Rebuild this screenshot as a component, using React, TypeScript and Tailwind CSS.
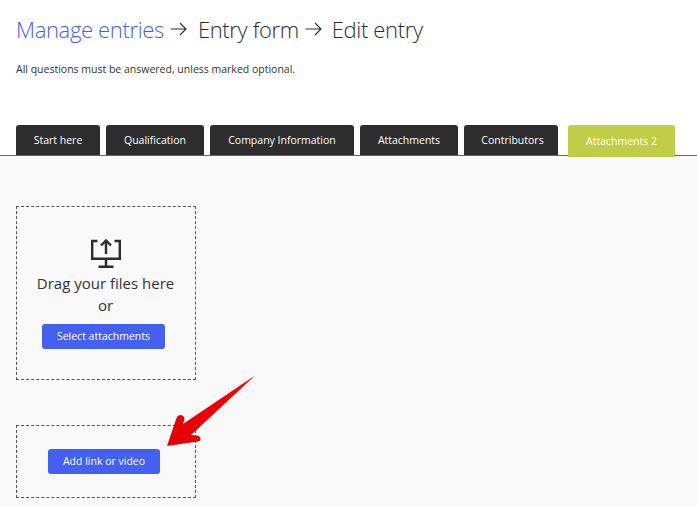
const tabs = [
  { label: "Start here", width: "w-[84px]", pad: "" },
  { label: "Qualification", width: "w-[98px]", pad: "" },
  { label: "Company Information", width: "w-[144px]", pad: "" },
  { label: "Attachments", width: "w-[98px]", pad: "" },
  { label: "Contributors", width: "w-[94px]", pad: "pl-[3px]" },
];

function UploadIcon() {
  return (
    <svg width="30" height="29" viewBox="0 0 30 29" fill="none" stroke="#2d2d2d" strokeWidth="2.4">
      <path d="M6.5 2H1.2V19.8H28.8V2H23.5" />
      <path d="M15 19.8V27.8M7.5 27.8H22.5" />
      <path d="M15 15V1.5M10 6.5L15 1.5L20 6.5" />
    </svg>
  );
}

function HeadingArrow({ right }: { right: string }) {
  return (
    <svg className={`ml-[6px] ${right}`} width="17" height="14" viewBox="0 0 17 14" fill="none" stroke="#2d2d2d" strokeWidth="1.1">
      <path d="M0.5 7H16M10 1L16 7L10 13" />
    </svg>
  );
}

function BlueButton({ label, width }: { label: string; width: string }) {
  return (
    <button className={`${width} h-[25px] rounded-[3px] bg-[#4460f1] text-[10.5px] font-medium text-white`}>
      {label}
    </button>
  );
}

export default function App() {
  return (
    <div className="relative h-[507px] w-[697px] overflow-hidden bg-white font-['Open_Sans',sans-serif]">
      {/* Header */}
      <div className="h-[125px] pl-4 pt-[13px]">
        <h1 className="flex items-center text-[22px] leading-[32px] font-light tracking-[-0.35px] text-[#2d2d2d]">
          <span className="text-[#4460f1]">Manage entries</span>
          <HeadingArrow right="mr-[11px]" />
          <span>Entry form</span>
          <HeadingArrow right="mr-[10px]" />
          <span>Edit entry</span>
        </h1>
        <p className="mt-[17px] text-[10.5px] leading-[14px] text-[#333333]">
          All questions must be answered, unless marked optional.
        </p>
      </div>

      {/* Tabs */}
      <div className="relative z-10 flex h-[30px] gap-1.5 pl-4">
        {tabs.map((tab) => (
          <div
            key={tab.label}
            className={`${tab.width} ${tab.pad} flex h-[30px] items-center justify-center rounded-t-[3px] bg-[#2d2d2d] pt-0.5 text-[10.5px] font-medium text-white`}
          >
            {tab.label}
          </div>
        ))}
        <div className="ml-1 flex h-8 w-[107px] items-center justify-center rounded-t-[3px] bg-[#c1cd46] pt-0.5 text-[10.5px] font-medium text-white">
          Attachments 2
        </div>
      </div>

      {/* Content */}
      <div className="h-[352px] border-t border-[#666666] bg-[#f9f9f9] pl-4 pt-[50px]">
        <div className="flex h-[174px] w-[180px] flex-col items-center border border-dashed border-[#555555] pr-[1px] pt-[32px]">
          <UploadIcon />
          <p className="mt-[4px] text-[15px] leading-[22px] text-[#333333]">Drag your files here</p>
          <p className="text-[15px] leading-[22px] text-[#333333]">or</p>
          <div className="mr-[4px] mt-[6px]">
            <BlueButton label="Select attachments" width="w-[123px]" />
          </div>
        </div>
        <div className="mt-[45px] flex h-[73px] w-[180px] items-center justify-center border border-dashed border-[#555555] pr-[4px]">
          <BlueButton label="Add link or video" width="w-[112px]" />
        </div>
      </div>

      {/* Annotation arrow */}
      <svg className="absolute left-0 top-0" width="697" height="507" viewBox="0 0 697 507" fill="none">
        <defs>
          <linearGradient id="arrowRed" x1="255" y1="376" x2="167" y2="446" gradientUnits="userSpaceOnUse">
            <stop offset="0" stopColor="#ff0000" />
            <stop offset="1" stopColor="#dd0008" />
          </linearGradient>
        </defs>
        <path
          d="M255 375.5L191 435L197 435.5C201 436 202 441 198 441.5L167 446L176.5 418C178 414 184 414 184.5 419L183 424Z"
          fill="url(#arrowRed)"
        />
      </svg>
    </div>
  );
}
